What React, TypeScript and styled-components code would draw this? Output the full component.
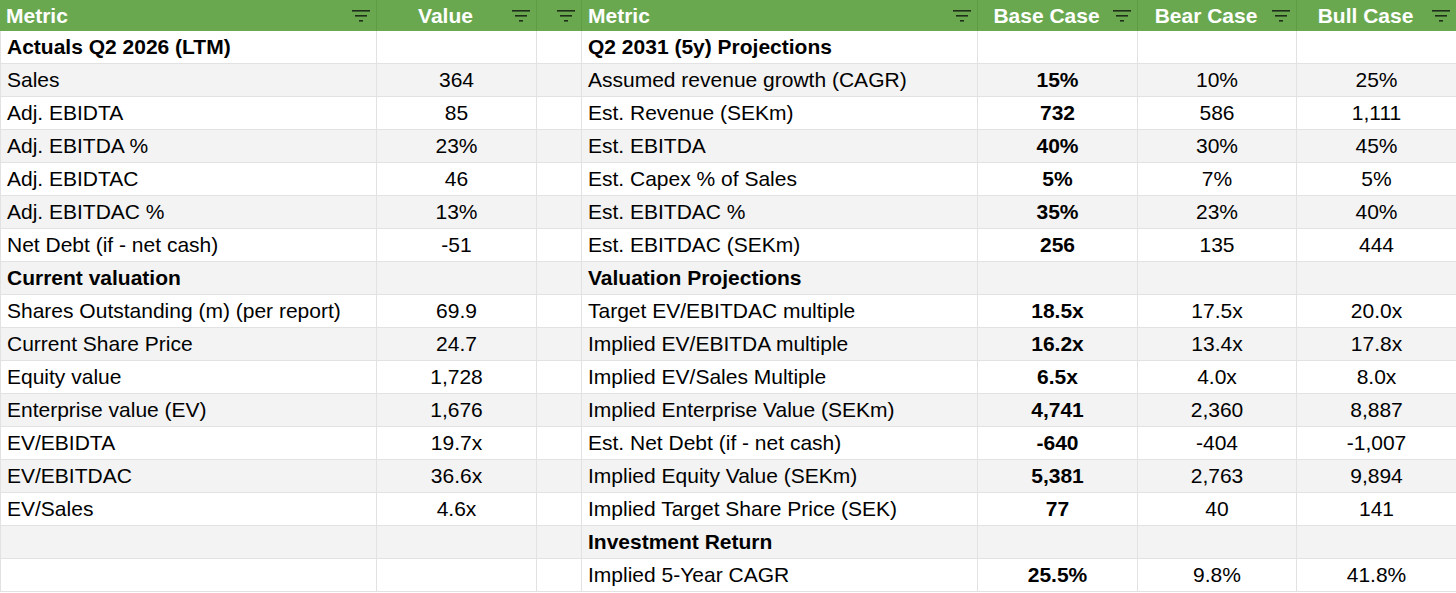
import React from 'react';
import styled, { createGlobalStyle } from 'styled-components';

const GlobalStyle = createGlobalStyle`
  html, body {
    margin: 0;
    padding: 0;
    background: #ffffff;
  }
  body {
    font-family: 'Liberation Sans', Arial, Helvetica, sans-serif;
  }
`;

const COLUMNS = '377px 160px 45px 396px 160px 159px 159px';

const Sheet = styled.div`
  width: 1456px;
  display: flex;
  flex-direction: column;
  font-family: 'Liberation Sans', Arial, Helvetica, sans-serif;
  font-size: 21px;
  color: #000;
`;

const HeaderRow = styled.div`
  display: grid;
  grid-template-columns: ${COLUMNS};
  height: 31px;
  background: #6aa84f;
`;

const HeaderCell = styled.div<{ $align?: 'left' | 'center' }>`
  display: flex;
  align-items: center;
  box-sizing: border-box;
  padding-left: 6px;
  padding-right: 6px;
  border-right: 1px solid #5f9c46;
  color: #ffffff;
  font-weight: 700;
  white-space: nowrap;
  overflow: hidden;

  &:last-child {
    border-right: none;
  }
`;

const HeaderLabel = styled.span<{ $align?: 'left' | 'center' }>`
  flex: 1;
  text-align: ${(p) => (p.$align === 'center' ? 'center' : 'left')};
  line-height: 31px;
`;

const FilterIcon = styled.svg`
  flex: none;
  width: 18px;
  height: 12px;
  margin-left: 4px;
  margin-top: 1px;
`;

const Row = styled.div<{ $shade?: boolean }>`
  display: grid;
  grid-template-columns: ${COLUMNS};
  height: 33px;
  background: ${(p) => (p.$shade ? '#f3f3f3' : '#ffffff')};
`;

const Cell = styled.div<{ $align?: 'left' | 'center'; $bold?: boolean }>`
  box-sizing: border-box;
  height: 33px;
  line-height: 32px;
  padding: 0 6px;
  border-right: 1px solid #e2e2e2;
  border-bottom: 1px solid #e2e2e2;
  text-align: ${(p) => (p.$align === 'center' ? 'center' : 'left')};
  font-weight: ${(p) => (p.$bold ? 700 : 400)};
  white-space: nowrap;
  overflow: hidden;

  &:first-child {
    border-left: 1px solid #e2e2e2;
  }
  &:last-child {
    border-right: none;
  }
`;

const Filter = () => (
  <FilterIcon viewBox="0 0 18 12" aria-hidden>
    <rect x="0" y="0" width="18" height="1.6" fill="#1f2e18" />
    <rect x="3" y="5" width="12" height="1.6" fill="#1f2e18" />
    <rect x="7" y="10" width="4" height="1.6" fill="#1f2e18" />
  </FilterIcon>
);

type Line = {
  left: string;
  value: string;
  leftBold?: boolean;
  metric: string;
  metricBold?: boolean;
  base: string;
  bear: string;
  bull: string;
};

const rows: Line[] = [
  { left: 'Actuals Q2 2026 (LTM)', leftBold: true, value: '', metric: 'Q2 2031 (5y) Projections', metricBold: true, base: '', bear: '', bull: '' },
  { left: 'Sales', value: '364', metric: 'Assumed revenue growth (CAGR)', base: '15%', bear: '10%', bull: '25%' },
  { left: 'Adj. EBIDTA', value: '85', metric: 'Est. Revenue (SEKm)', base: '732', bear: '586', bull: '1,111' },
  { left: 'Adj. EBITDA %', value: '23%', metric: 'Est. EBITDA', base: '40%', bear: '30%', bull: '45%' },
  { left: 'Adj. EBIDTAC', value: '46', metric: 'Est. Capex % of Sales', base: '5%', bear: '7%', bull: '5%' },
  { left: 'Adj. EBITDAC %', value: '13%', metric: 'Est. EBITDAC %', base: '35%', bear: '23%', bull: '40%' },
  { left: 'Net Debt (if - net cash)', value: '-51', metric: 'Est. EBITDAC (SEKm)', base: '256', bear: '135', bull: '444' },
  { left: 'Current valuation', leftBold: true, value: '', metric: 'Valuation Projections', metricBold: true, base: '', bear: '', bull: '' },
  { left: 'Shares Outstanding (m) (per report)', value: '69.9', metric: 'Target EV/EBITDAC multiple', base: '18.5x', bear: '17.5x', bull: '20.0x' },
  { left: 'Current Share Price', value: '24.7', metric: 'Implied EV/EBITDA multiple', base: '16.2x', bear: '13.4x', bull: '17.8x' },
  { left: 'Equity value', value: '1,728', metric: 'Implied EV/Sales Multiple', base: '6.5x', bear: '4.0x', bull: '8.0x' },
  { left: 'Enterprise value (EV)', value: '1,676', metric: 'Implied Enterprise Value (SEKm)', base: '4,741', bear: '2,360', bull: '8,887' },
  { left: 'EV/EBIDTA', value: '19.7x', metric: 'Est. Net Debt (if - net cash)', base: '-640', bear: '-404', bull: '-1,007' },
  { left: 'EV/EBITDAC', value: '36.6x', metric: 'Implied Equity Value (SEKm)', base: '5,381', bear: '2,763', bull: '9,894' },
  { left: 'EV/Sales', value: '4.6x', metric: 'Implied Target Share Price (SEK)', base: '77', bear: '40', bull: '141' },
  { left: '', value: '', metric: 'Investment Return', metricBold: true, base: '', bear: '', bull: '' },
  { left: '', value: '', metric: 'Implied 5-Year CAGR', base: '25.5%', bear: '9.8%', bull: '41.8%' },
];

export default function App() {
  return (
    <>
      <GlobalStyle />
      <Sheet>
        <HeaderRow>
          <HeaderCell>
            <HeaderLabel>Metric</HeaderLabel>
            <Filter />
          </HeaderCell>
          <HeaderCell>
            <HeaderLabel $align="center">Value</HeaderLabel>
            <Filter />
          </HeaderCell>
          <HeaderCell>
            <HeaderLabel />
            <Filter />
          </HeaderCell>
          <HeaderCell>
            <HeaderLabel>Metric</HeaderLabel>
            <Filter />
          </HeaderCell>
          <HeaderCell>
            <HeaderLabel $align="center">Base Case</HeaderLabel>
            <Filter />
          </HeaderCell>
          <HeaderCell>
            <HeaderLabel $align="center">Bear Case</HeaderLabel>
            <Filter />
          </HeaderCell>
          <HeaderCell>
            <HeaderLabel $align="center">Bull Case</HeaderLabel>
            <Filter />
          </HeaderCell>
        </HeaderRow>
        {rows.map((r, i) => (
          <Row key={i} $shade={i % 2 === 1}>
            <Cell $bold={r.leftBold}>{r.left}</Cell>
            <Cell $align="center">{r.value}</Cell>
            <Cell />
            <Cell $bold={r.metricBold}>{r.metric}</Cell>
            <Cell $align="center" $bold>{r.base}</Cell>
            <Cell $align="center">{r.bear}</Cell>
            <Cell $align="center">{r.bull}</Cell>
          </Row>
        ))}
      </Sheet>
    </>
  );
}
